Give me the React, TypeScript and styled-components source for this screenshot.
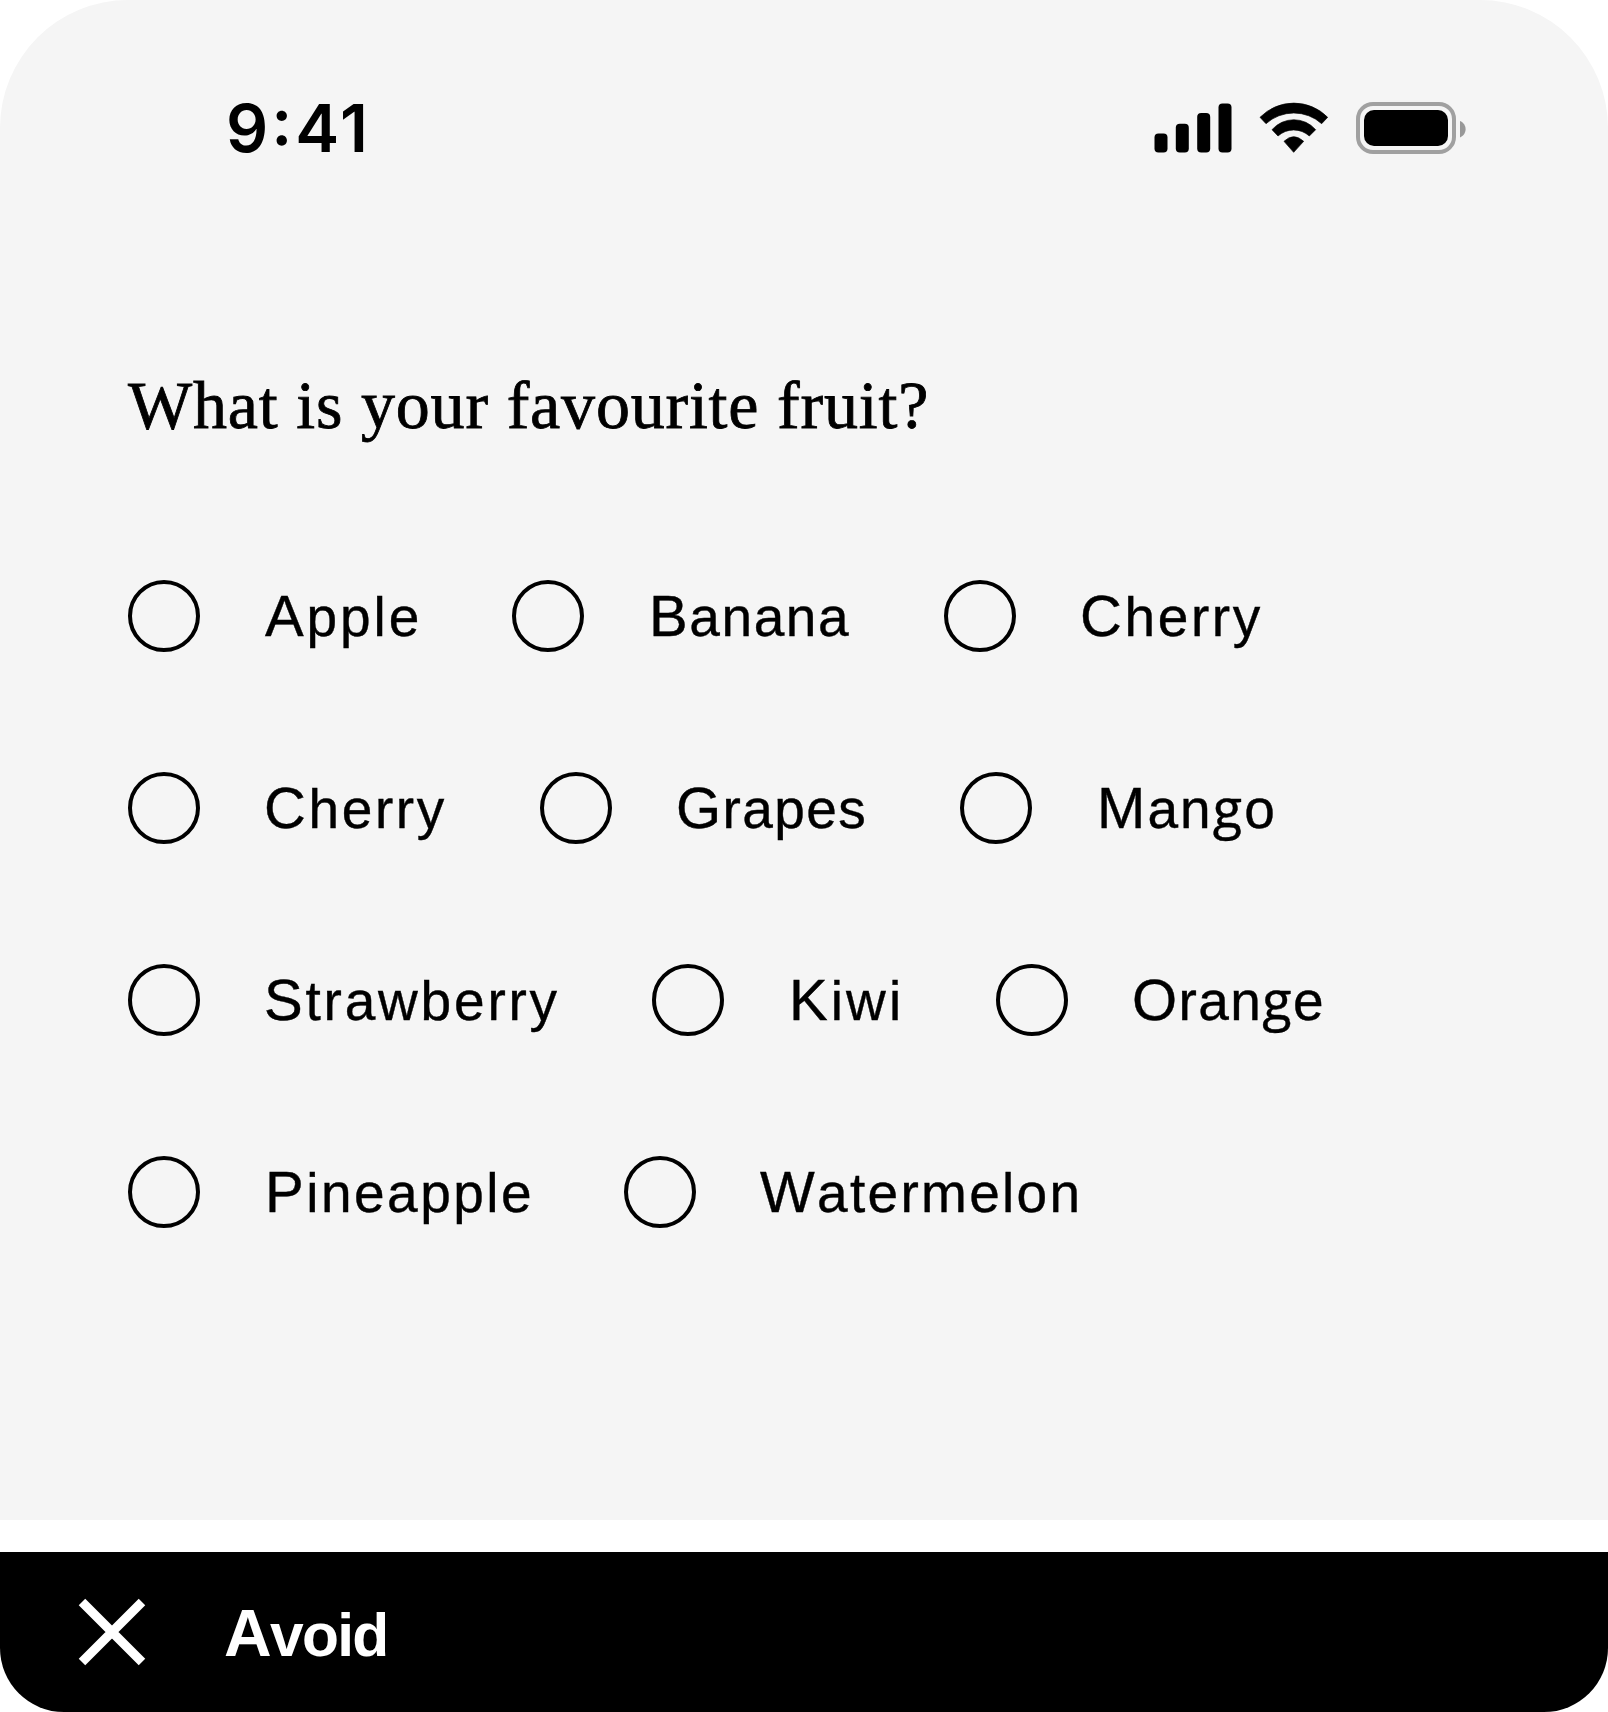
import React, { useState } from "react";
import styled, { createGlobalStyle } from "styled-components";

const GlobalStyle = createGlobalStyle`
  * { box-sizing: border-box; }
  body { margin: 0; background: #ffffff; }
`;

const Page = styled.div`
  width: 1608px;
  height: 1712px;
  display: flex;
  flex-direction: column;
  gap: 32px;
  color: #000000;
  overflow: hidden;
`;

const Screen = styled.main`
  height: 1520px;
  background: #f5f5f5;
  border-radius: 128px 128px 0 0;
`;

const StatusBar = styled.header`
  height: 256px;
  padding: 100px 140px 0 226px;
  display: flex;
  justify-content: space-between;
  align-items: flex-start;
`;

const Clock = styled.time`
  font: 600 66px/56px Inter, sans-serif;
  font-feature-settings: "calt" 1, "case" 1;
  letter-spacing: 3px;
`;

const StatusIcons = styled.div`
  display: flex;
  gap: 26px;
`;

const StatusIcon = styled.svg`
  display: block;
  height: 56px;
`;

const Question = styled.h1`
  margin: 105px 0 0 128px;
  font: 400 68px/88px "Liberation Serif", serif;
  letter-spacing: 0.8px;
  white-space: nowrap;
  -webkit-text-stroke: 0.8px #000000;
`;

const Options = styled.div`
  margin: 131px 0 0 128px;
  display: flex;
  flex-direction: column;
  gap: 120px;
`;

const OptionRow = styled.div`
  display: flex;
  gap: 88px;
`;

const Option = styled.button`
  appearance: none;
  border: 0;
  padding: 0;
  background: none;
  color: inherit;
  display: flex;
  gap: 64px;
  height: 72px;
  text-align: left;
  cursor: pointer;
`;

const Radio = styled.span<{ $on: boolean }>`
  flex: none;
  width: 72px;
  height: 72px;
  border: 4px solid #000000;
  border-radius: 50%;
  box-shadow: inset 0 0 0 ${(p) => (p.$on ? "16px" : "0")} #000000;
`;

const OptionLabel = styled.span<{ $width: number; $tracking: number; $indent: number }>`
  display: block;
  width: ${(p) => p.$width}px;
  height: 72px;
  font: 400 55px/72px "Liberation Sans", sans-serif;
  font-kerning: none;
  letter-spacing: ${(p) => p.$tracking}px;
  text-indent: ${(p) => p.$indent}px;
  white-space: nowrap;
  -webkit-text-stroke: 0.4px #000000;

  &::first-letter {
    font-size: 58px;
  }
`;

const LoopedG = styled.span`
  font-family: "Open Sans", "Liberation Sans", sans-serif;
  font-size: 54px;
  line-height: 0;
`;

const Footer = styled.footer`
  height: 160px;
  padding: 4px 78px 0;
  display: flex;
  align-items: center;
  gap: 78px;
  background: #000000;
  color: #ffffff;
  border-radius: 0 0 64px 64px;
`;

const CrossIcon = styled.svg`
  display: block;
  width: 68px;
  height: 68px;
  margin-bottom: 4px;
`;

const FooterLabel = styled.span`
  display: block;
  font: 700 60.5px/80px "Liberation Sans", sans-serif;
  font-kerning: none;
  letter-spacing: -1.7px;

  &::first-letter {
    font-size: 66px;
  }
`;

type Fruit = { name: string; width: number; tracking: number; indent?: number };

const rows: Fruit[][] = [
  [
    { name: "Apple", width: 160, tracking: 2.9, indent: 1 },
    { name: "Banana", width: 208, tracking: 1.6, indent: 1 },
    { name: "Cherry", width: 188, tracking: 2.6 },
  ],
  [
    { name: "Cherry", width: 188, tracking: 2.6 },
    { name: "Grapes", width: 196, tracking: 1.4 },
    { name: "Mango", width: 184, tracking: 2.1, indent: 1 },
  ],
  [
    { name: "Strawberry", width: 300, tracking: 2.8 },
    { name: "Kiwi", width: 120, tracking: 3.1, indent: 1 },
    { name: "Orange", width: 200, tracking: 1.4 },
  ],
  [
    { name: "Pineapple", width: 272, tracking: 2.5, indent: 1 },
    { name: "Watermelon", width: 328, tracking: 2.3 },
  ],
];

function FruitName({ name }: { name: string }) {
  const at = name.indexOf("g");
  if (at < 0) return <>{name}</>;
  return (
    <>
      {name.slice(0, at)}
      <LoopedG>g</LoopedG>
      {name.slice(at + 1)}
    </>
  );
}

function Signal() {
  return (
    <StatusIcon width="79" viewBox="1154 100 79 56">
      <rect x="1154.5" y="133.4" width="13" height="19.2" rx="4" />
      <rect x="1175.8" y="123.8" width="13" height="28.8" rx="4" />
      <rect x="1197.2" y="113.1" width="13" height="39.5" rx="4" />
      <rect x="1218.5" y="103.4" width="13" height="49.2" rx="4" />
    </StatusIcon>
  );
}

function Wifi() {
  return (
    <StatusIcon width="71" viewBox="387 59 213 168">
      <g stroke="#000000" strokeWidth="2" strokeLinejoin="round">
        <path d="M390 111A142 142 0 0 1 593 111L575 130A125 125 0 0 0 408 130Z" />
        <path d="M426 148A87 87 0 0 1 557 148L538 167A70 70 0 0 0 444 167Z" />
        <path d="M462 183Q491 155 521 183L491 216Z" />
      </g>
    </StatusIcon>
  );
}

function Battery() {
  return (
    <StatusIcon width="112" viewBox="1356 100 112 56">
      <rect x="1358" y="104" width="96" height="48" rx="15" fill="none" stroke="#a0a0a0" strokeWidth="4" />
      <rect x="1364" y="110" width="84" height="36" rx="10" />
      <path d="M1460 121C1463.4 122.4 1465.6 125.6 1465.6 129.2C1465.6 132.8 1463.4 136 1460 137.4Z" fill="#989898" />
    </StatusIcon>
  );
}

export default function App() {
  const [picked, setPicked] = useState<string | null>(null);
  return (
    <>
      <GlobalStyle />
      <Page>
        <Screen>
          <StatusBar>
            <Clock>9:41</Clock>
            <StatusIcons>
              <Signal />
              <Wifi />
              <Battery />
            </StatusIcons>
          </StatusBar>
          <Question>What is your favourite fruit?</Question>
          <Options role="radiogroup">
            {rows.map((row, r) => (
              <OptionRow key={r}>
                {row.map((fruit, i) => {
                  const id = `${r}-${i}`;
                  return (
                    <Option key={id} role="radio" aria-checked={picked === id} onClick={() => setPicked(id)}>
                      <Radio $on={picked === id} />
                      <OptionLabel $width={fruit.width} $tracking={fruit.tracking} $indent={fruit.indent ?? 0}>
                        <FruitName name={fruit.name} />
                      </OptionLabel>
                    </Option>
                  );
                })}
              </OptionRow>
            ))}
          </Options>
        </Screen>
        <Footer>
          <CrossIcon viewBox="78 1598 68 68">
            <path d="M82 1602L142 1662M142 1602L82 1662" stroke="#ffffff" strokeWidth="9.2" />
          </CrossIcon>
          <FooterLabel>Avoid</FooterLabel>
        </Footer>
      </Page>
    </>
  );
}
